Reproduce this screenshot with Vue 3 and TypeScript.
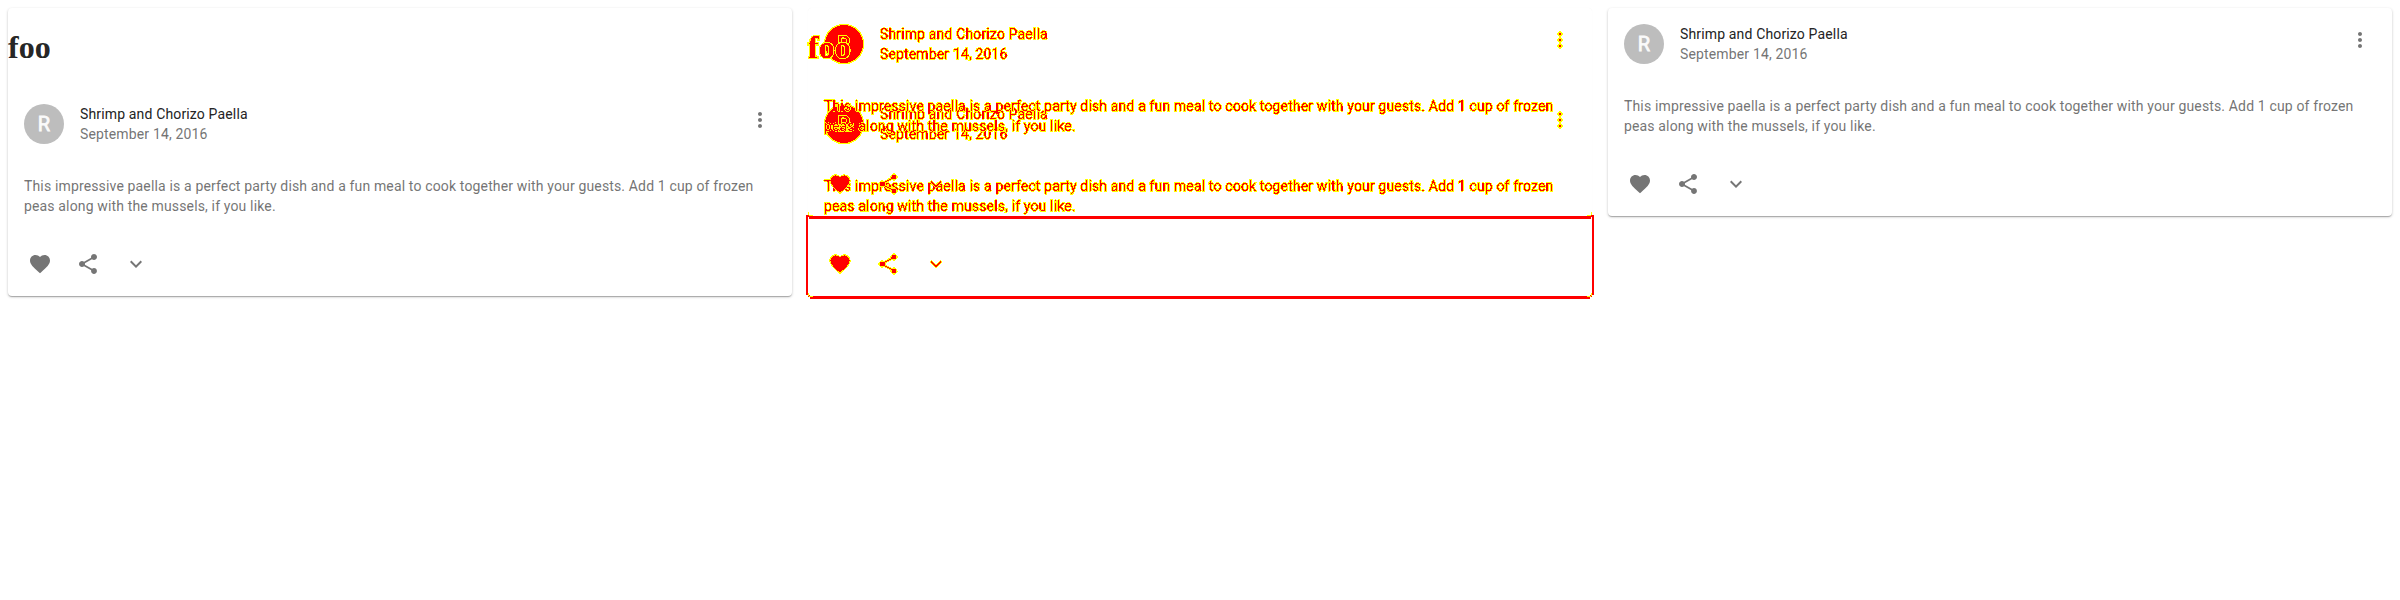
<script setup lang="ts">
import { defineComponent, h } from 'vue'

const icons = {
  heart: 'M12 21.35l-1.45-1.32C5.4 15.36 2 12.28 2 8.5 2 5.42 4.42 3 7.5 3c1.74 0 3.41.81 4.5 2.09C13.09 3.81 14.76 3 16.5 3 19.58 3 22 5.42 22 8.5c0 3.78-3.4 6.86-8.55 11.54L12 21.35z',
  share: 'M18 16.08c-.76 0-1.44.3-1.96.77L8.91 12.7c.05-.23.09-.46.09-.7s-.04-.47-.09-.7l7.05-4.11c.54.5 1.25.81 2.04.81 1.66 0 3-1.34 3-3s-1.34-3-3-3-3 1.34-3 3c0 .24.04.47.09.7L8.04 9.81C7.5 9.31 6.79 9 6 9c-1.66 0-3 1.34-3 3s1.34 3 3 3c.79 0 1.5-.31 2.04-.81l7.12 4.16c-.05.21-.08.43-.08.65 0 1.61 1.31 2.92 2.92 2.92 1.61 0 2.92-1.31 2.92-2.92s-1.31-2.92-2.92-2.92z',
  expand: 'M16.59 8.59L12 13.17 7.41 8.59 6 10l6 6 6-6z',
  more: 'M12 8c1.1 0 2-.9 2-2s-.9-2-2-2-2 .9-2 2 .9 2 2 2zm0 2c-1.1 0-2 .9-2 2s.9 2 2 2 2-.9 2-2-.9-2-2-2zm0 6c-1.1 0-2 .9-2 2s.9 2 2 2 2-.9 2-2-.9-2-2-2z',
}

const iconButton = (name: keyof typeof icons) =>
  h('span', { class: 'icon-button' }, [h('svg', { viewBox: '0 0 24 24' }, [h('path', { d: icons[name] })])])

const RecipeCard = defineComponent({
  props: { heading: { type: String, default: '' } },
  setup(props) {
    return () =>
      h('article', { class: 'recipe-card' }, [
        props.heading ? h('h1', props.heading) : null,
        h('header', [
          h('div', { class: 'avatar' }, [h('span', 'R')]),
          h('div', { class: 'titles' }, [
            h('div', { class: 'title' }, 'Shrimp and Chorizo Paella'),
            h('div', 'September 14, 2016'),
          ]),
          iconButton('more'),
        ]),
        h('p', 'This impressive paella is a perfect party dish and a fun meal to cook together with your guests. Add 1 cup of frozen peas along with the mussels, if you like.'),
        h('footer', [iconButton('heart'), iconButton('share'), iconButton('expand')]),
      ])
  },
})
</script>

<template>
  <main class="comparison">
    <section class="panel"><RecipeCard heading="foo" /></section>
    <section class="panel diff">
      <div class="ghost"></div>
      <div class="marks">
        <RecipeCard heading="foo" />
        <RecipeCard class="overlay" />
      </div>
      <svg class="changed-area" viewBox="0 0 788 87" shape-rendering="crispEdges">
        <path fill="#f00" d="M0 3h2v80H0zM786 3h2v80h-2zM2 3h1v1h6v3H3V5H2zM786 3h-1v1h-6v3h6V5h1zM9 4h770v3H9zM4 84h780v3H4zM2 83h2v2H2zM784 83h2v2h-2z" />
        <path fill="#ff0" d="M2 0h1v3H2zM3 3h4v1H3zM785 0h1v3h-1zM781 3h4v1h-4zM2 81h1v3H2zM3 84h4v1H3zM785 81h1v3h-1zM781 84h4v1h-4z" />
      </svg>
    </section>
    <section class="panel"><RecipeCard /></section>
    <svg class="filters" aria-hidden="true">
      <!-- solid dark areas become red; light outlines and soft edges become yellow -->
      <filter id="difference" x="0" y="0" width="100%" height="100%" color-interpolation-filters="sRGB">
        <feColorMatrix values="0 0 0 0 1  -1 0 0 1 0  0 0 0 0 0  0 0 0 1 0" />
        <feComponentTransfer>
          <feFuncG type="discrete" tableValues="1 1 1 1 1 0 0 0 0 0" />
          <feFuncA type="discrete" tableValues="0 0 0 1 1 1 1 1 1 1" />
        </feComponentTransfer>
      </filter>
    </svg>
  </main>
</template>

<style>
body {
  margin: 0;
  background: #fff;
}

.comparison {
  display: grid;
  grid-template-columns: repeat(3, 800px);
  height: 600px;
  overflow: hidden;
}

.panel {
  position: relative;
  padding: 8px;
}

.recipe-card {
  border-radius: 4px;
  background: #fff;
  color: rgba(0, 0, 0, 0.54);
  box-shadow: 0 1px 3px rgba(0, 0, 0, 0.2), 0 1px 1px rgba(0, 0, 0, 0.14), 0 2px 1px -1px rgba(0, 0, 0, 0.12);
  font: 400 14px/20px Roboto, sans-serif;
  letter-spacing: 0.01071em;
  -webkit-text-stroke: 0.1px currentColor;
}

.recipe-card h1 {
  margin: 0;
  padding: 21px 0 22px;
  color: rgba(0, 0, 0, 0.87);
  font: 700 32px/37px "Liberation Serif", serif;
  letter-spacing: 0;
}

.recipe-card header {
  display: flex;
  align-items: center;
  height: 40px;
  padding: 16px;
}

.recipe-card .avatar {
  display: grid;
  place-items: center;
  width: 40px;
  height: 40px;
  margin-right: 16px;
  border-radius: 50%;
  background: #bdbdbd;
  color: #fafafa;
  font-size: 20px;
  letter-spacing: 0;
  -webkit-text-stroke: 0.8px #fafafa;
}

.recipe-card .titles {
  flex: 1;
}

.recipe-card .title {
  color: rgba(0, 0, 0, 0.87);
}

.recipe-card .icon-button {
  box-sizing: border-box;
  width: 48px;
  height: 48px;
  padding: 12px;
}

.recipe-card header .icon-button {
  align-self: flex-start;
  margin: -8px -8px 0 0;
}

.recipe-card svg {
  display: block;
  width: 24px;
  height: 24px;
  fill: currentColor;
}

.recipe-card p {
  margin: 0;
  padding: 16px;
}

.recipe-card footer {
  display: flex;
  padding: 8px;
}

.marks {
  position: relative;
  filter: url(#difference);
}

.marks .recipe-card,
.marks .recipe-card h1,
.marks .recipe-card .title {
  background: none;
  box-shadow: none;
  color: #000;
  -webkit-text-stroke: 1.2px #fff;
  paint-order: stroke fill;
}

.marks .recipe-card h1 {
  position: relative;
  z-index: 2;
  -webkit-text-stroke-width: 2px;
}

.marks .recipe-card .avatar {
  background: #000;
  color: #000;
  box-shadow: inset 0 0 0 1px #fff;
  -webkit-text-stroke: 2px #fff;
}

.marks .recipe-card svg {
  stroke: #fff;
  stroke-width: 1px;
  paint-order: normal;
}

.marks .overlay {
  position: absolute;
  inset: 0 0 auto;
}

.ghost {
  position: absolute;
  inset: 8px 8px auto;
  height: 208px;
  border-radius: 4px;
  box-shadow: 0 0 1px rgba(0, 0, 0, 0.06);
}

.changed-area {
  position: absolute;
  top: 212px;
  left: 6px;
  width: 788px;
  height: 87px;
}

.filters {
  position: absolute;
  width: 0;
  height: 0;
}
</style>
